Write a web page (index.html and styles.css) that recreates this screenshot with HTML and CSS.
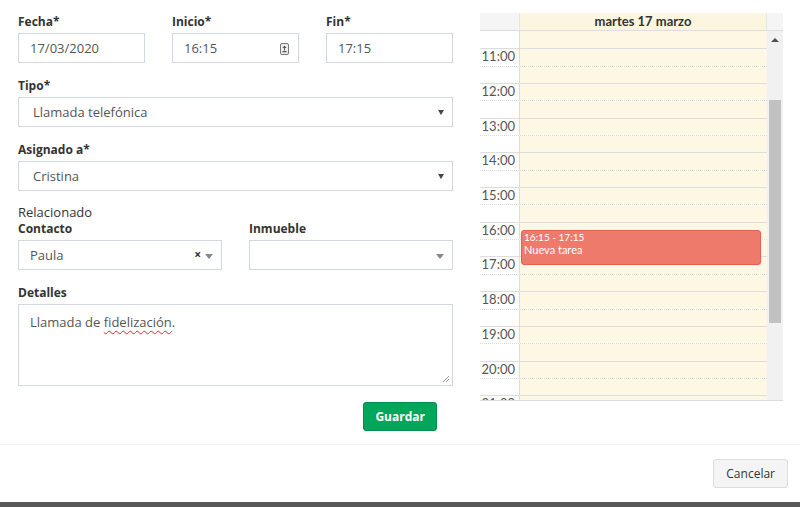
FILE: index.html
```html
<!DOCTYPE html>
<html lang="es">
<head>
    <meta charset="UTF-8">
    <title>Nueva tarea</title>
    <link rel="stylesheet" href="styles.css">
</head>
<body>
    <section class="modal">
        <div class="modal-body">
            <!-- formulario -->
            <div class="task-form">
                <div class="row">
                    <div class="field">
                        <label>Fecha*</label>
                        <div class="input">17/03/2020</div>
                    </div>
                    <div class="field">
                        <label>Inicio*</label>
                        <div class="input input-time">16:15
                            <svg class="time-icon" width="9" height="12" viewBox="0 0 9 12">
                                <rect x="0.5" y="0.5" width="8" height="11" rx="1.5" fill="#eee" stroke="#777"/>
                                <path d="M4.5 2.5 L6.5 5 L2.5 5 Z" fill="#555"/>
                                <rect x="4" y="5" width="1" height="2.5" fill="#555"/>
                                <rect x="2.5" y="8" width="4" height="1.3" fill="#555"/>
                            </svg>
                        </div>
                    </div>
                    <div class="field">
                        <label>Fin*</label>
                        <div class="input">17:15</div>
                    </div>
                </div>
                <div class="field">
                    <label>Tipo*</label>
                    <div class="select">Llamada telefónica<span class="caret"></span></div>
                </div>
                <div class="field">
                    <label>Asignado a*</label>
                    <div class="select">Cristina<span class="caret"></span></div>
                </div>
                <p class="group-title">Relacionado</p>
                <div class="row">
                    <div class="field">
                        <label>Contacto</label>
                        <div class="select2">Paula<span class="clear">×</span><span class="caret-s2"></span></div>
                    </div>
                    <div class="field">
                        <label>Inmueble</label>
                        <div class="select2"><span class="caret-s2"></span></div>
                    </div>
                </div>
                <div class="field field-last">
                    <label>Detalles</label>
                    <div class="textarea">Llamada de <span class="misspelled">fidelización</span>.
                        <svg class="grip" width="8" height="8" viewBox="0 0 8 8">
                            <path d="M7 1 L1 7 M7 4 L4 7" stroke="#999" stroke-width="1"/>
                        </svg>
                    </div>
                </div>
                <div class="actions">
                    <button class="btn btn-success">Guardar</button>
                </div>
            </div>

            <!-- agenda del dia -->
            <div class="calendar">
                <div class="cal-head">
                    <div></div>
                    <div class="cal-day-head">martes 17 marzo</div>
                    <div></div>
                </div>
                <div class="cal-body">
                    <div class="slots">
                        <div class="slot first"><span class="slot-time"></span><span class="slot-day"></span></div>
                        <div class="slot"><span class="slot-time">11:00</span><span class="slot-day"></span></div>
                        <div class="slot half"><span class="slot-time"></span><span class="slot-day"></span></div>
                        <div class="slot"><span class="slot-time">12:00</span><span class="slot-day"></span></div>
                        <div class="slot half"><span class="slot-time"></span><span class="slot-day"></span></div>
                        <div class="slot"><span class="slot-time">13:00</span><span class="slot-day"></span></div>
                        <div class="slot half"><span class="slot-time"></span><span class="slot-day"></span></div>
                        <div class="slot"><span class="slot-time">14:00</span><span class="slot-day"></span></div>
                        <div class="slot half"><span class="slot-time"></span><span class="slot-day"></span></div>
                        <div class="slot"><span class="slot-time">15:00</span><span class="slot-day"></span></div>
                        <div class="slot half"><span class="slot-time"></span><span class="slot-day"></span></div>
                        <div class="slot"><span class="slot-time">16:00</span><span class="slot-day"></span></div>
                        <div class="slot half"><span class="slot-time"></span><span class="slot-day"></span></div>
                        <div class="slot"><span class="slot-time">17:00</span><span class="slot-day"></span></div>
                        <div class="slot half"><span class="slot-time"></span><span class="slot-day"></span></div>
                        <div class="slot"><span class="slot-time">18:00</span><span class="slot-day"></span></div>
                        <div class="slot half"><span class="slot-time"></span><span class="slot-day"></span></div>
                        <div class="slot"><span class="slot-time">19:00</span><span class="slot-day"></span></div>
                        <div class="slot half"><span class="slot-time"></span><span class="slot-day"></span></div>
                        <div class="slot"><span class="slot-time">20:00</span><span class="slot-day"></span></div>
                        <div class="slot half"><span class="slot-time"></span><span class="slot-day"></span></div>
                        <div class="slot"><span class="slot-time">21:00</span><span class="slot-day"></span></div>
                        <div class="slot half"><span class="slot-time"></span><span class="slot-day"></span></div>
                        <div class="event">
                            <div class="event-time">16:15 - 17:15</div>
                            <div class="event-title">Nueva tarea</div>
                        </div>
                    </div>
                    <div class="scrollbar">
                        <span class="arrow-up"></span>
                        <span class="thumb"></span>
                        <span class="arrow-down"></span>
                    </div>
                </div>
            </div>
        </div>
        <div class="modal-footer">
            <button class="btn btn-default">Cancelar</button>
        </div>
    </section>
    <div class="backdrop"></div>
</body>
</html>
```

FILE: styles.css
```css
body {
    margin: 0;
    background: #fff;
    color: #333;
    font-family: "Open Sans", "Noto Sans", sans-serif;
}

.modal-body {
    display: flex;
    height: 431px;
    padding: 13px 0 0 18px;
    border-bottom: 1px solid #f2f2f2;
}

/* formulario */
.task-form {
    width: 435px;
}

.row {
    display: flex;
    gap: 27px;
}

.row > .field {
    flex: 1;
}

.field {
    margin-bottom: 14px;
}

.field label {
    display: block;
    font-size: 12px;
    font-weight: 700;
    line-height: 17px;
    margin-bottom: 3px;
}

.input,
.select,
.select2,
.textarea {
    position: relative;
    box-sizing: border-box;
    height: 30px;
    border: 1px solid #d2d6de;
    font-size: 13px;
    line-height: 28px;
    color: #555;
    padding: 0 11px;
}

.select {
    padding-left: 14px;
}

.time-icon {
    position: absolute;
    right: 9px;
    top: 9px;
}

.caret {
    position: absolute;
    right: 8px;
    top: 12px;
    border-left: 3px solid transparent;
    border-right: 3px solid transparent;
    border-top: 5px solid #444;
}

.clear {
    position: absolute;
    right: 20px;
    top: 0;
    font-size: 12px;
    font-weight: 700;
    color: #333;
}

.caret-s2 {
    position: absolute;
    right: 8px;
    top: 13px;
    border-left: 4px solid transparent;
    border-right: 4px solid transparent;
    border-top: 5px solid #888;
}

.group-title {
    margin: -1px 0 0;
    font-size: 13px;
    line-height: 16px;
}

.field-last {
    margin-bottom: 0;
}

.textarea {
    height: 82px;
    line-height: 18px;
    padding: 8px 11px;
}

.misspelled {
    text-decoration: underline wavy #e23;
    text-decoration-thickness: 1px;
    text-underline-offset: 3px;
}

.grip {
    position: absolute;
    right: 2px;
    bottom: 2px;
}

.actions {
    margin-top: 16px;
    padding-right: 16px;
    text-align: right;
}

.btn {
    height: 29px;
    padding: 0 11px;
    border-radius: 3px;
    font-family: "Open Sans", sans-serif;
    font-size: 12px;
    cursor: pointer;
}

.btn-success {
    background: #00a65a;
    border: 1px solid #008d4c;
    color: #fff;
    font-weight: 700;
}

.btn-default {
    background: #f4f4f4;
    border: 1px solid #ddd;
    color: #333;
    padding: 0 12px;
}

/* agenda */
.calendar {
    width: 303px;
    margin-left: 27px;
    font-family: Lato, sans-serif;
    color: #333;
}

.cal-head {
    display: grid;
    grid-template-columns: 39px 248px 16px;
    height: 17px;
    background: #f5f5f5;
    border-bottom: 1px solid #ddd;
}

.cal-day-head {
    background: #fcf6e1;
    border-left: 1px solid #e6e6e6;
    border-right: 1px solid #e6e6e6;
    text-align: center;
    font-size: 13px;
    font-weight: 700;
    line-height: 17px;
}

.cal-body {
    display: grid;
    grid-template-columns: 287px 16px;
    height: 369px;
    overflow: hidden;
    border-bottom: 1px solid #ddd;
}

.slots {
    position: relative;
}

.slot {
    display: grid;
    grid-template-columns: 39px 1fr;
    box-sizing: border-box;
    height: 17.35px;
    border-top: 1px solid #ddd;
}

.slot.half {
    border-top: 1px dotted #ddd;
}

.slot.first {
    border-top: 0;
}

.slot-time {
    font-size: 13px;
    line-height: 13px;
    padding-top: 1px;
    padding-right: 4px;
    text-align: right;
    color: #555;
    white-space: nowrap;
}

.slot-day {
    background: #fcf8e3;
    border-left: 1px solid #ddd;
}

.event {
    position: absolute;
    left: 41px;
    top: 199px;
    width: 240px;
    height: 35px;
    box-sizing: border-box;
    background: #ee7a6c;
    border: 1px solid #e5604f;
    border-radius: 3px;
    color: #fff;
    padding: 0 2px;
}

.event-time {
    font-size: 10px;
    line-height: 12px;
}

.event-title {
    font-size: 11px;
    line-height: 13px;
}

.scrollbar {
    display: flex;
    flex-direction: column;
    align-items: center;
    background: #f1f1f1;
}

.arrow-up {
    margin-top: 7px;
    border-left: 4px solid transparent;
    border-right: 4px solid transparent;
    border-bottom: 4px solid #505050;
}

.thumb {
    width: 12px;
    height: 223px;
    margin-top: 58px;
    background: #c1c1c1;
}

.arrow-down {
    margin-top: auto;
    margin-bottom: 9px;
    border-left: 4px solid transparent;
    border-right: 4px solid transparent;
    border-top: 4px solid #505050;
}

.modal-footer {
    padding: 14px 12px 14px 0;
    text-align: right;
}

.backdrop {
    height: 5px;
    background: #585858;
}
```
